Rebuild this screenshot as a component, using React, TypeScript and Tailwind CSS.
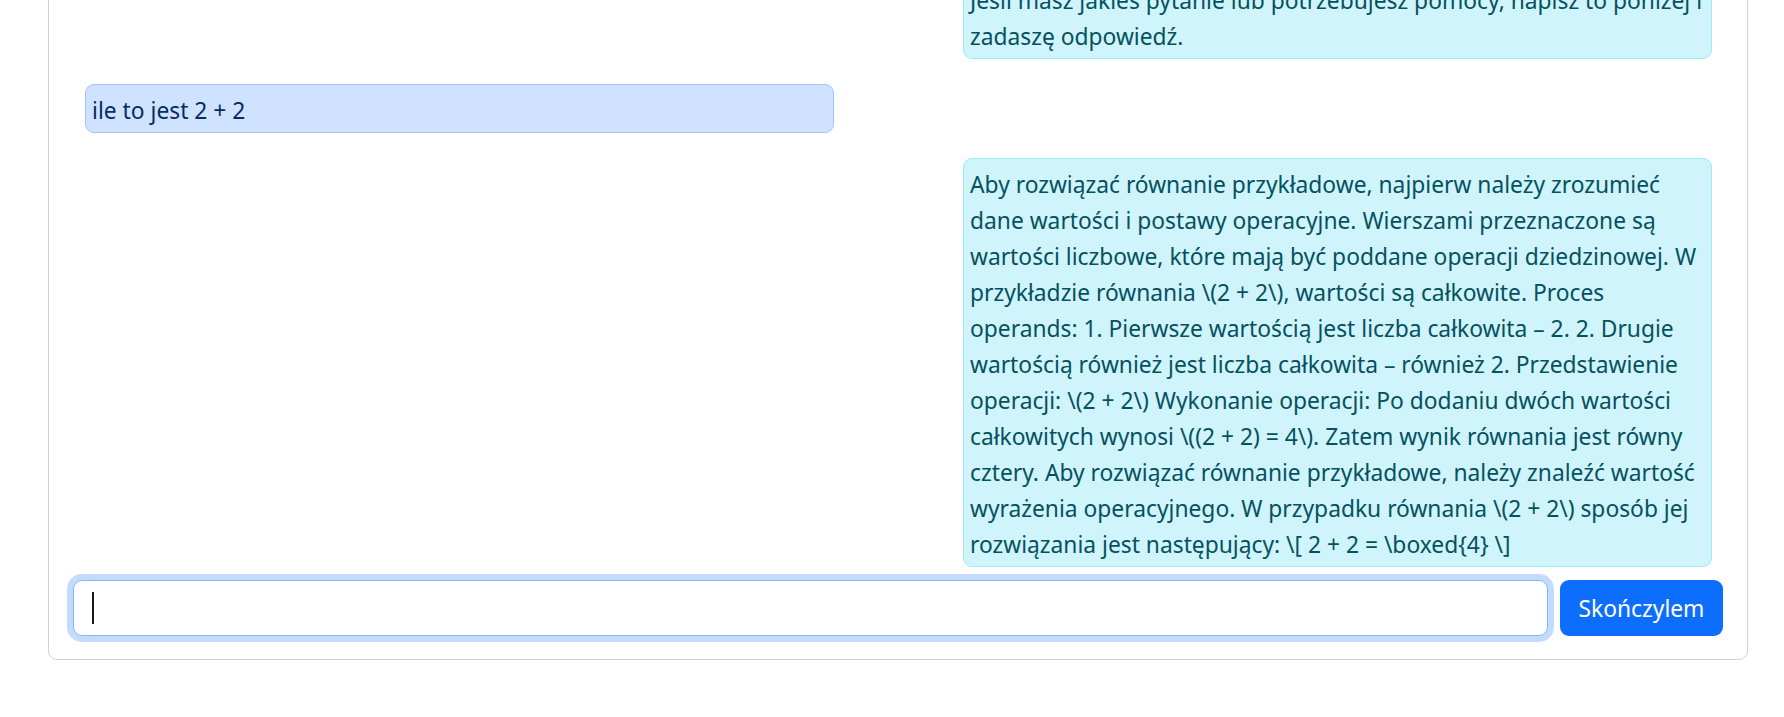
const font = { fontFamily: '"Noto Sans", "Liberation Sans", sans-serif' };

const welcome = [
  "Jeśli masz jakieś pytanie lub potrzebujesz pomocy, napisz to poniżej i",
  "zadaszę odpowiedź.",
];

const answer = [
  "Aby rozwiązać równanie przykładowe, najpierw należy zrozumieć",
  "dane wartości i postawy operacyjne. Wierszami przeznaczone są",
  "wartości liczbowe, które mają być poddane operacji dziedzinowej. W",
  "przykładzie równania \\(2 + 2\\), wartości są całkowite. Proces",
  "operands: 1. Pierwsze wartością jest liczba całkowita – 2. 2. Drugie",
  "wartością również jest liczba całkowita – również 2. Przedstawienie",
  "operacji: \\(2 + 2\\) Wykonanie operacji: Po dodaniu dwóch wartości",
  "całkowitych wynosi \\((2 + 2) = 4\\). Zatem wynik równania jest równy",
  "cztery. Aby rozwiązać równanie przykładowe, należy znaleźć wartość",
  "wyrażenia operacyjnego. W przypadku równania \\(2 + 2\\) sposób jej",
  "rozwiązania jest następujący: \\[ 2 + 2 = \\boxed{4} \\]",
];

function BotMessage({ lines }: { lines: string[] }) {
  return (
    <div className="w-[749px] self-end rounded-[9px] border border-[#9eeaf9] bg-[#cff4fc] px-[6px] pt-[8px] pb-[3px] text-[22.8px] leading-[36px] text-[#055160]">
      {lines.map((line, i) => (
        <span key={i} className="block whitespace-nowrap">
          {line}
        </span>
      ))}
    </div>
  );
}

function UserMessage({ text }: { text: string }) {
  return (
    <div className="w-[749px] self-start rounded-[9px] border border-[#9ec5fe] bg-[#cfe2ff] px-[6px] pt-[8px] pb-[3px] text-[22.8px] leading-[36px] text-[#052c65]">
      {text}
    </div>
  );
}

export default function App() {
  return (
    <div className="h-[717px] overflow-hidden bg-white" style={font}>
      <div className="ml-[48px] -mt-[62px] w-[1700px] rounded-[9px] border border-[#d2d2d2] bg-white">
        <div className="flex flex-col gap-[25px] pt-[35px] pl-[36px] pr-[35px]">
          <BotMessage lines={welcome} />
          <UserMessage text="ile to jest 2 + 2" />
          <BotMessage lines={answer} />
        </div>

        <div className="flex items-center gap-[12px] px-[24px] pt-[13px] pb-[23px]">
          <div className="flex h-[56px] flex-1 items-center rounded-[9px] border border-[#86b7fe] bg-white px-[18px] shadow-[0_0_0_6px_rgba(13,110,253,0.25)]">
            <span className="h-[32px] w-[2px] bg-[#1a1a1a]" />
          </div>
          <button className="h-[56px] w-[163px] rounded-[9px] bg-[#0d6efd] pt-[2px] text-[22.8px] text-white">
            Skończylem
          </button>
        </div>
      </div>
    </div>
  );
}
